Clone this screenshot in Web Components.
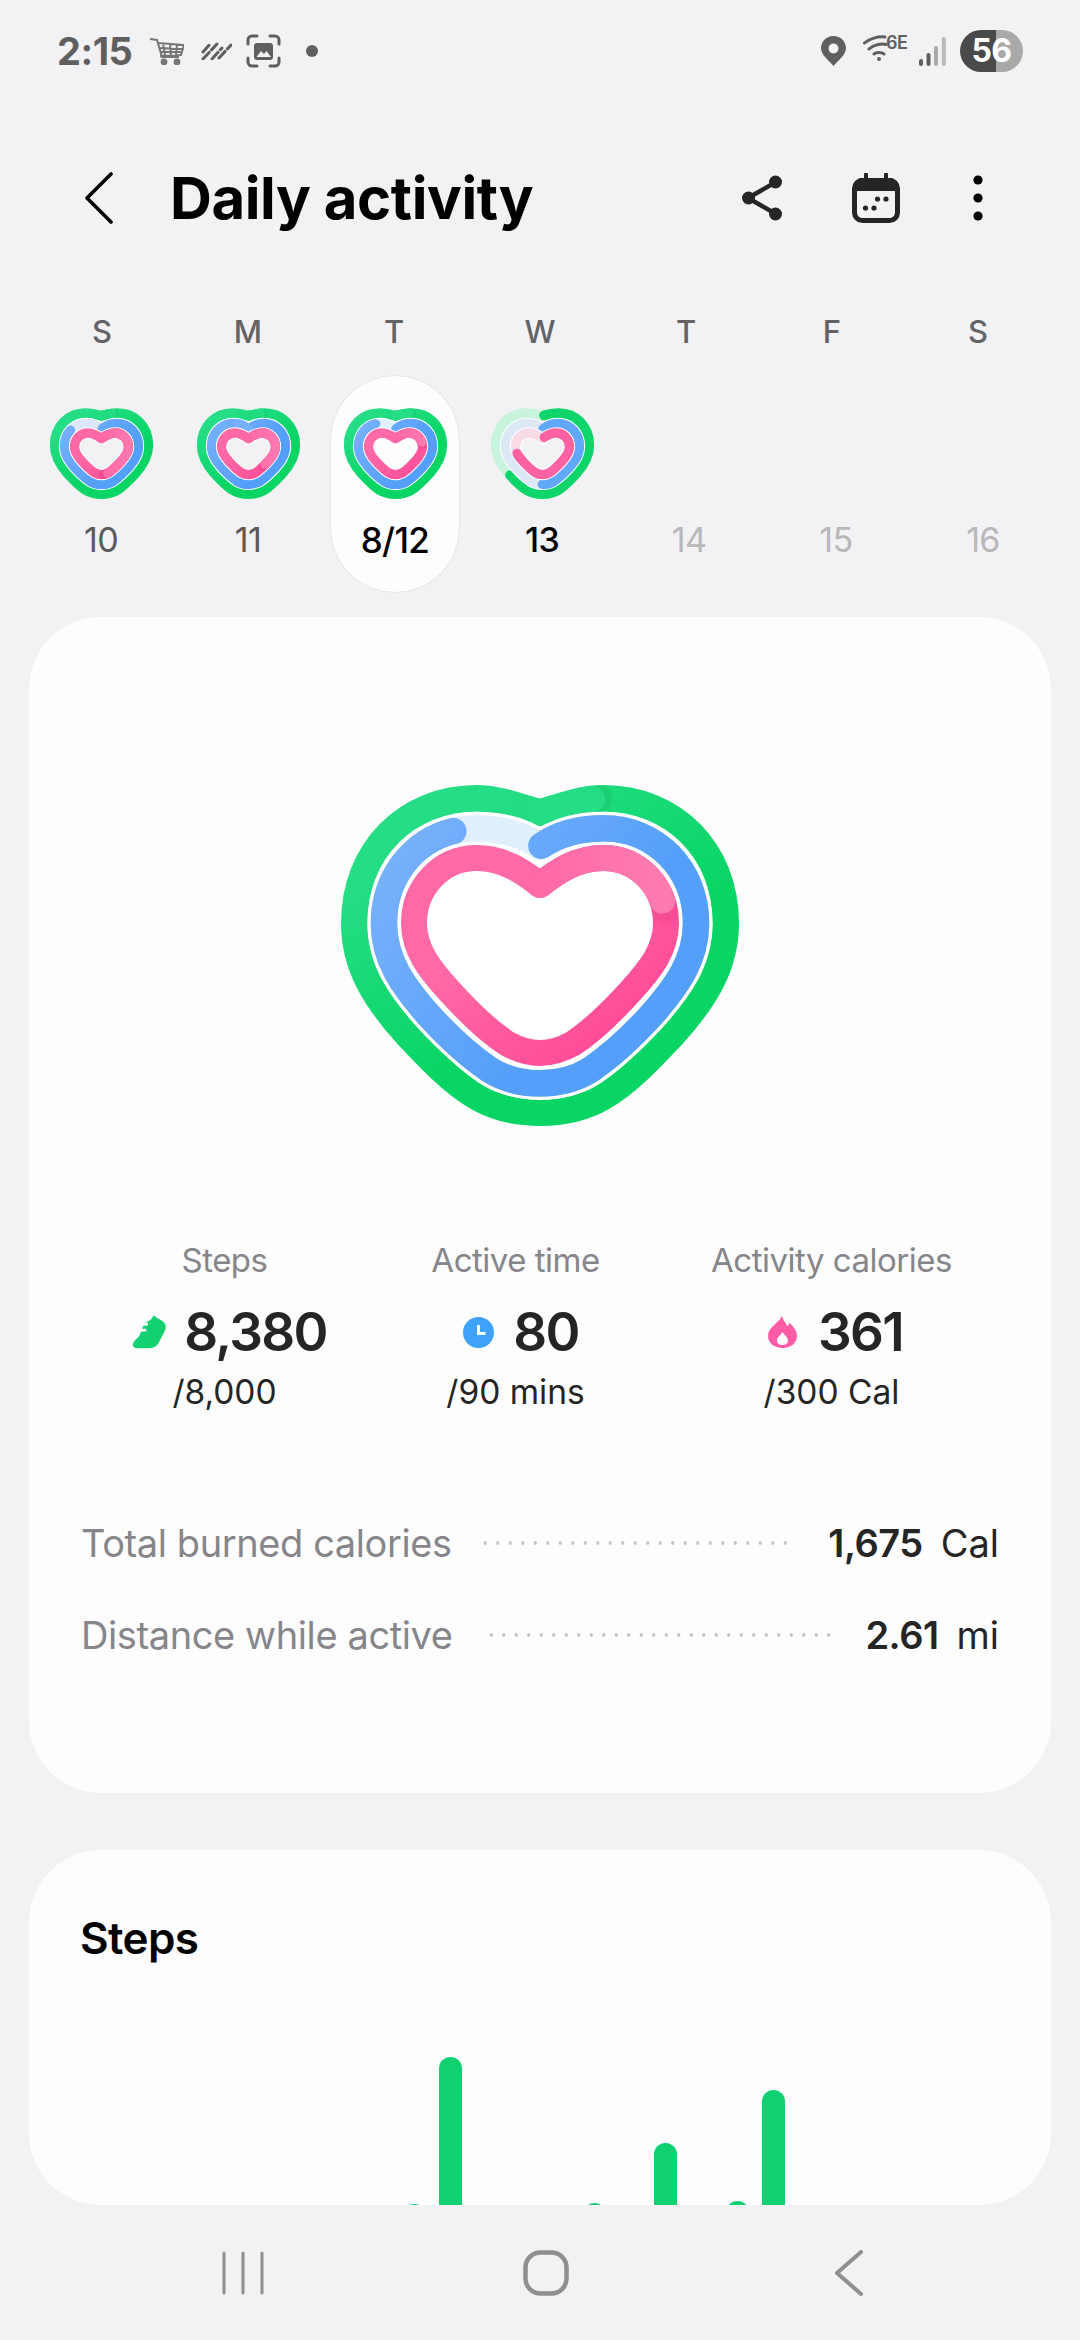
<!DOCTYPE html>
<html lang="en"><head><meta charset="utf-8"><title>Daily activity</title>
<style>
html,body{margin:0;padding:0}
body{width:1080px;height:2340px;overflow:hidden;background:#f2f2f4;font-family:Inter,"Noto Sans",sans-serif;color:#252525;display:flex;flex-direction:column}
</style></head><body>
<status-bar></status-bar>
<app-header title="Daily activity"></app-header>
<week-strip></week-strip>
<summary-card></summary-card>
<steps-card></steps-card>
<nav-bar></nav-bar>
<script>
function define(name, html, init){
  customElements.define(name, class extends HTMLElement{
    constructor(){super();const r=this.attachShadow({mode:'open'});r.innerHTML=typeof html==='function'?html(this):html;}
    connectedCallback(){ if(init) init(this); }
  });
}
/* normalised half-heart outlines: c1=[u, fraction of notch rise], then [u,v] control triples */
const SHAPES={
  g:{c1:[.13,.5],pts:[[.23,0],[.341,0],[.718,0],[1,.164],[1,.398],[1,.536],[.883,.642],[.722,.748],[.578,.838],[.467,.907],[.341,.95],[.233,.987],[.108,1],[0,1]]},
  b:{c1:[.107,.66],pts:[[.256,0],[.406,0],[.748,0],[1,.163],[1,.373],[1,.516],[.876,.621],[.705,.739],[.577,.824],[.449,.895],[.32,.948],[.224,.984],[.107,1],[0,1]]},
  p:{c1:[.132,.49],pts:[[.29,0],[.503,0],[.78,0],[1,.147],[1,.335],[1,.472],[.873,.574],[.714,.686],[.582,.78],[.423,.882],[.265,.95],[.172,.984],[.079,1],[0,1]]}
};
function heartPath(cx,hw,top,n,bot,key){
  const S=SHAPES[key],H=bot-top,f=x=>+x.toFixed(1);
  const pt=(u,v,s)=>`${f(cx+s*u*hw)} ${f(top+v*H)}`;
  const c1y=f(n-(n-top)*S.c1[1]);
  let d=`M${cx} ${n}C${f(cx+S.c1[0]*hw)} ${c1y} `;
  S.pts.forEach((p,i)=>{d+=pt(p[0],p[1],1)+(i%3===1&&i<S.pts.length-1?'C':' ');});
  const rev=S.pts.slice(1,-1).reverse();
  rev.forEach((p,i)=>{d+=(i%3===0?'C':' ')+pt(p[0],p[1],-1);});
  d+=`C${f(cx-S.pts[0][0]*hw)} ${f(top)} ${f(cx-S.c1[0]*hw)} ${c1y} ${cx} ${n}`;
  return d;
}
const GEOM={
  large:{vb:'0 0 1320 1140',w:440,h:380,gap:20,
    g:[660,557,115,158,1058,80],b:[660,468,205,260,970,80],p:[660,378,294,375,879,78]},
  small:{vb:'0 0 375 324',w:125,h:108,gap:6,
    g:[187.5,140,40,47,282,30],b:[187.5,111,70,88,253,28],p:[187.5,81,99,116,224,28]}
};
const shade=(to,o)=>[[0,to+1.4,`rgba(190,0,90,${o||.05})`],[0,to+.7,`rgba(190,0,90,${o||.06})`]];
const VARIANTS={
  d10:{g:{t:'url(#gg)',s:[[0,4.4,'rgba(0,0,0,.05)'],[0,3.6,'#22dc82']]},
       b:{t:'#dbe7f7',s:[[.3,84,'url(#bg)']]},
       p:{t:'url(#pg)',s:[...shade(47,.09),[0,46,'url(#po)']]}},
  d11:{g:{t:'url(#gg)',s:[[0,5,'rgba(0,0,0,.05)'],[0,4.2,'#22dc82']]},
       b:{t:'url(#bg)',s:[[94,100,'#78b0fb']]},
       p:{t:'url(#pg)',s:[...shade(38,.09),[0,37,'url(#po)']]}},
  d12:{g:{t:'url(#gg)',s:[[0,5.6,'rgba(0,0,0,.05)'],[0,4.9,'#24dd84']]},
       b:{t:'#e1f0fe',s:[[.2,90,'url(#bg)']]},
       p:{t:'url(#pg)',s:[...shade(21),[0,20.4,'url(#po)']]}},
  d13:{g:{t:'#c8f3dc',s:[[0.6,64,'#0dd56a']]},
       b:{t:'#dde8f7',s:[[.4,50,'#62a8fa']]},
       p:{t:'#f7dbe6',s:[[1.5,72,'#ff62a3']]}}
};
function ringMarkup(size,variant,bg){
  const G=GEOM[size],V=VARIANTS[variant];
  const ring=(k)=>{
    const [cx,hw,top,n,bot,w]=G[k], d=heartPath(cx,hw,top,n,bot,k), c=V[k];
    let o='';
    if(k!=='g') o+=`<path d="${d}" stroke="#fff" stroke-width="${w+G.gap}" stroke-linecap="round" fill="${bg}"/>`;
    o+=`<path d="${d}" stroke="${c.t}" stroke-width="${w}" stroke-linecap="round"/>`;
    c.s.forEach(([a,b,col])=>{o+=`<path d="${d}" pathLength="100" stroke="${col}" stroke-width="${w}" stroke-linecap="round" stroke-dasharray="${(b-a).toFixed(2)} 1000" stroke-dashoffset="${(-a).toFixed(2)}"/>`;});
    return o;
  };
  const W=+G.vb.split(' ')[2],Hh=+G.vb.split(' ')[3];
  return `<svg width="${G.w}" height="${G.h}" viewBox="${G.vb}" fill="none" aria-hidden="true"><defs>
  <linearGradient id="gg" gradientUnits="userSpaceOnUse" x1="${W*.4}" y1="${Hh*.1}" x2="${W*.65}" y2="${Hh*.55}"><stop offset="0" stop-color="#24dd84"/><stop offset="1" stop-color="#08d564"/></linearGradient>
  <linearGradient id="bg" gradientUnits="userSpaceOnUse" x1="${W*.15}" y1="${Hh*.2}" x2="${W*.6}" y2="${Hh*.6}"><stop offset="0" stop-color="#7ab2fb"/><stop offset="1" stop-color="#549ffa"/></linearGradient>
  <linearGradient id="pg" gradientUnits="userSpaceOnUse" x1="${W*.5}" y1="${Hh*.35}" x2="${W*.75}" y2="${Hh*.7}"><stop offset="0" stop-color="#ff69a6"/><stop offset="1" stop-color="#ff4896"/></linearGradient>
  <linearGradient id="po" gradientUnits="userSpaceOnUse" x1="${W*.5}" y1="0" x2="${W*.75}" y2="0"><stop offset="0" stop-color="#ff69a6"/><stop offset="1" stop-color="#ff7aaf"/></linearGradient>
  </defs>${ring('g')}${ring('b')}${ring('p')}</svg>`;
}
define('ring-heart',el=>`<style>:host{display:block;line-height:0}</style>`+ringMarkup(el.getAttribute('size')||'small',el.getAttribute('variant')||'d12',el.getAttribute('bg')||'#f2f2f4'));

define('status-bar',`<style>
:host{display:flex;align-items:center;height:102px;padding:0 57px;box-sizing:border-box;color:#5f5f60;flex:none}
.t{font:700 38px/1 Inter,sans-serif;letter-spacing:-.5px;width:93px}
svg{display:block;flex:none}
.sp{flex:1}
.six{font:600 18px/1 Inter,sans-serif;letter-spacing:-.6px;margin:-17px 13px 0 -7px;width:20px;color:#5f5f60}
.bat{width:63px;height:42px;border-radius:21px;background:linear-gradient(90deg,#4a4a4b 57%,#a9a9aa 57%);color:#fff;font:700 32px/42px Inter,sans-serif;text-align:center;letter-spacing:-.5px;margin-left:14px}
</style>
<span class="t">2:15</span>
<svg width="34" height="28" viewBox="0 0 34 28" fill="none" stroke="#767677" stroke-width="2"><path d="M0 2l7 1 5 17h17"/><path d="M8 6l26 2-3 10-21 1M13 6l2 13M20 7l1 12M27 7l-1 11M9 11l23 1M11 15l20 0"/><circle cx="14" cy="25" r="2.4" fill="#767677"/><circle cx="27" cy="25" r="2.4" fill="#767677"/></svg>
<svg width="31" height="18" viewBox="0 0 31 18" style="margin-left:17px" fill="none" stroke="#5f5f60" stroke-width="3" stroke-linecap="round" stroke-dasharray="9 3.5"><path d="M2 10L10 1M2 17L16 2M11 17L21 6M18 16L30 3"/></svg>
<svg width="35" height="34" viewBox="0 0 35 34" style="margin-left:14px" fill="none"><path d="M2 10V6a4 4 0 0 1 4-4h5M24 2h5a4 4 0 0 1 4 4v4M33 24v4a4 4 0 0 1-4 4h-5M11 32H6a4 4 0 0 1-4-4v-4" stroke="#5f5f60" stroke-width="3" stroke-linecap="round"/><rect x="8" y="9" width="19" height="17" rx="3" fill="#5f5f60"/><path d="M10.5 23l4.5-6 3 3 2.5-3 4.500 6z" fill="#f2f2f4"/></svg>
<svg width="12" height="12" viewBox="0 0 12 12" style="margin-left:25px"><circle cx="6" cy="6" r="6" fill="#5f5f60"/></svg>
<span class="sp"></span>
<svg width="25" height="30" viewBox="0 0 25 30"><path fill-rule="evenodd" d="M12.500 30C9 25.500 0 19 0 12.200 0 5.400 5.600 0 12.500 0S25 5.400 25 12.200C25 19 16 25.500 12.500 30zM12.500 7.500a5 5 0 1 0 0 10 5 5 0 0 0 0-10z" fill="#5f5f60"/></svg>
<svg width="30" height="27" viewBox="0 0 30 27" style="margin:-7px 0 0 17px" fill="none" stroke="#5f5f60" stroke-width="3" stroke-linecap="round"><path d="M1.500 9C6 5 15 2 22 3M6 15C10 11 18 9 23 10.500M11 20c2-2 8-2 10 0"/><circle cx="16" cy="25" r="1" fill="#5f5f60" stroke-width="2"/></svg>
<span class="six">6E</span>
<svg width="27" height="29" viewBox="0 0 27 29"><rect x="0" y="22" width="4" height="7" rx="2" fill="#5f5f60"/><rect x="7.500" y="16" width="4" height="13" rx="2" fill="#5f5f60"/><rect x="15" y="9" width="4" height="20" rx="2" fill="#a9a9aa"/><rect x="22.800" y="0" width="4" height="29" rx="2" fill="#b9b9ba"/></svg>
<span class="bat">56</span>`);

define('app-header',el=>`<style>
:host{display:flex;align-items:center;height:92px;margin-top:50px;padding:0 97px 0 85px;flex:none;color:#000}
svg{display:block;flex:none}
h1{margin:0 0 0 57px;font:700 58px/1 Inter,sans-serif;letter-spacing:-.4px;flex:1;white-space:nowrap}
</style>
<svg width="28" height="52" viewBox="0 0 28 52" fill="none" stroke="#000" stroke-width="3.600" stroke-linecap="round" stroke-linejoin="round"><path d="M26 2L2 26l24 24"/></svg>
<h1>${el.getAttribute('title')}</h1>
<svg width="40" height="46" viewBox="0 0 40 46" fill="#252525" stroke="#252525"><path d="M34 7L6 23l28 16" fill="none" stroke-width="4.500"/><circle cx="33.500" cy="7" r="6.500" stroke="none"/><circle cx="6.500" cy="23" r="6.500" stroke="none"/><circle cx="33.500" cy="39" r="6.500" stroke="none"/></svg>
<svg width="48" height="50" viewBox="0 0 48 50" style="margin-left:70px" fill="none"><rect x="2.500" y="7.500" width="43" height="40" rx="8" stroke="#252525" stroke-width="5"/><path d="M4 10a6 6 0 0 1 6-5h28a6 6 0 0 1 6 5v8H4z" fill="#252525"/><path d="M14 7V1.500M34 7V1.500" stroke="#252525" stroke-width="4" stroke-linecap="round"/><g fill="#252525"><circle cx="13.500" cy="35" r="2.600"/><circle cx="22" cy="35" r="2.600"/><circle cx="25.500" cy="26" r="2.600"/><circle cx="34" cy="26" r="2.600"/></g></svg>
<svg width="10" height="46" viewBox="0 0 10 46" style="margin-left:73px" fill="#000"><circle cx="5" cy="5" r="4.600"/><circle cx="5" cy="23" r="4.600"/><circle cx="5" cy="41" r="4.600"/></svg>`);

define('day-cell',el=>{
  const v=el.getAttribute('variant');
  const sel=el.hasAttribute('selected');
  return `<style>
  :host{display:flex;flex-direction:column;align-items:center;box-sizing:border-box;height:218px;padding-top:24px;border-radius:65px;border:1.500px solid transparent;font:400 34px/44px Inter,sans-serif;color:#5a5a5c}
  :host([selected]){background:#fdfdfe;border-color:#e6e6e8;color:#000;font-weight:500;font-size:35px}
  :host([today]){color:#000;font-weight:500}
  :host([future]){color:#b8b8ba}
  .h{height:108px}
  .n{margin-top:10px;letter-spacing:-.6px}
  </style><div class="h">${v?`<ring-heart variant="${v}" size="small" bg="${sel?'#fdfdfe':'#f2f2f4'}"></ring-heart>`:''}</div><div class="n"><slot></slot></div>`;
});

define('week-strip',`<style>
:host{display:block;flex:none}
.l{display:grid;grid-template-columns:repeat(7,146px);padding:0 0 0 29px;margin-top:66px;font:500 31px/44px Inter,sans-serif;color:#636366;text-align:center}
.d{display:grid;grid-template-columns:repeat(7,130px);column-gap:17px;padding-left:36px;margin-top:21px}
</style>
<div class="l"><span>S</span><span>M</span><span>T</span><span>W</span><span>T</span><span>F</span><span>S</span></div>
<div class="d">
<day-cell variant="d10">10</day-cell><day-cell variant="d11">11</day-cell><day-cell variant="d12" selected>8/12</day-cell><day-cell variant="d13" today>13</day-cell><day-cell future>14</day-cell><day-cell future>15</day-cell><day-cell future>16</day-cell>
</div>`);

define('stat-col',el=>`<style>
:host{display:flex;flex-direction:column;align-items:center;text-align:center;white-space:nowrap}
.l{font:400 33px/44px Inter,sans-serif;color:#86868a;letter-spacing:-.5px}
.v{display:flex;align-items:center;height:60px;margin-top:20px;margin-left:${el.getAttribute('shift')||0}px;font:600 53px/60px Inter,sans-serif;color:#252525;letter-spacing:-1.7px}
.s{font:400 33.500px/44px Inter,sans-serif;color:#252525;margin-top:8px}
::slotted(svg){display:block;flex:none}
</style>
<div class="l">${el.getAttribute('label')}</div>
<div class="v"><slot></slot><span style="margin-left:${el.getAttribute('gap')||18}px">${el.getAttribute('value')}</span></div>
<div class="s">${el.getAttribute('sub')}</div>`);

define('kv-row',el=>`<style>
:host{display:flex;align-items:center;height:50px;font:400 38px/50px Inter,sans-serif;white-space:nowrap}
.k{color:#86868a;letter-spacing:-.4px}
.d{flex:1;height:4px;margin:0 ${el.getAttribute('dr')||33}px 0 ${el.getAttribute('dl')||27}px;background:radial-gradient(circle,#c2c2c4 1.500px,transparent 2px) 0 0/12.500px 4px repeat-x}
.v{font-weight:600;color:#252525;letter-spacing:-.5px}
.u{margin-left:18px;color:#252525}
</style><span class="k">${el.getAttribute('key')}</span><span class="d"></span><span class="v">${el.getAttribute('value')}</span><span class="u">${el.getAttribute('unit')}</span>`);

define('summary-card',`<style>
:host{display:block;box-sizing:border-box;flex:none;width:1022px;height:1176px;margin:24px 0 0 29px;background:#fdfdfe;border-radius:72px;padding-top:143px}
ring-heart{width:440px;margin:0 auto}
.stats{display:grid;grid-template-columns:289px 293px 339px;padding-left:51px;margin-top:98px}
.rows{display:flex;flex-direction:column;gap:42px;padding:0 52px;margin-top:104px}
</style>
<ring-heart size="large" variant="d12" bg="#fff"></ring-heart>
<div class="stats">
<stat-col label="Steps" value="8,380" sub="/8,000" shift="10"><svg width="34" height="34" viewBox="20 28 102 100"><path d="M85 28C92 36 104 40 112 46C122 54 124 64 118 76L100 110C94 122 82 127 68 127L36 127C22 127 18 114 28 104L42 90 46 78 64 76 62 68 50 68 54 60 68 58 68 50 60 50C72 46 82 38 85 28Z" fill="#13d070"/></svg></stat-col>
<stat-col label="Active time" value="80" sub="/90 mins" shift="11" gap="19"><svg width="31" height="31" viewBox="0 0 31 31" fill="none"><circle cx="15.500" cy="15.500" r="15.500" fill="#3ea2f8"/><path d="M15.500 8v8.500h7" stroke="#fff" stroke-width="3"/></svg></stat-col>
<stat-col label="Activity calories" value="361" sub="/300 Cal" gap="21" shift="8"><svg width="29" height="32" viewBox="0 0 29 32"><path fill-rule="evenodd" d="M14 0c1.500 5 4 7 5 10 1-.500 2-1.500 2.500-3 4 3.500 7.500 8 7.500 13 0 7-6.200 12-14.500 12S0 27 0 20C0 11 11 7 14 0zM14.500 16c-2 3-5.500 5.500-5.500 8.500 0 2.800 2.300 4.500 5.500 4.500s5.500-1.700 5.500-4.500c0-3-3.500-5.500-5.500-8.500z" fill="#ff5ca8"/></svg></stat-col>
</div>
<div class="rows">
<kv-row key="Total burned calories" value="1,675" unit="Cal"></kv-row>
<kv-row key="Distance while active" value="2.61" unit="mi" dl="32" dr="26"></kv-row>
</div>`);

define('steps-card',`<style>
:host{display:block;box-sizing:border-box;flex:none;width:1022px;height:355px;margin:57px 0 0 29px;background:#fdfdfe;border-radius:72px;overflow:hidden;padding-top:60px}
h2{margin:0 0 0 51px;font:600 44px/56px Inter,sans-serif;color:#000;letter-spacing:-.6px}
.chart{display:grid;grid-template-columns:repeat(24,35.830px);justify-items:center;align-items:start;padding-left:45.500px;height:300px;margin-top:0;box-sizing:border-box}
.chart i{display:block;width:23px;height:260px;border-radius:11.500px;background:#10d070}
</style>
<h2>Steps</h2>
<div class="chart" id="c"></div>`,el=>{
  const c=el.shadowRoot.getElementById('c');
  const tops={9:2204,10:2057,14:2203,16:2143,18:2201,19:2090};
  for(let i=0;i<24;i++){const s=document.createElement('span');if(tops[i]){const b=document.createElement('i');b.style.marginTop=(tops[i]-1966)+'px';s.append(b);}c.append(s);}
});

define('nav-bar',`<style>
:host{display:grid;grid-template-columns:repeat(3,303px);padding-left:91px;align-items:center;justify-items:center;height:135px;flex:none}
svg{display:block}
</style>
<svg width="44" height="44" viewBox="0 0 44 44" fill="none" stroke="#8f8f91" stroke-width="3" stroke-linecap="round"><path d="M3 2v40M22 2v40M41 2v40"/></svg>
<svg width="46" height="46" viewBox="0 0 46 46" fill="none"><rect x="2.500" y="2.500" width="41" height="41" rx="15" stroke="#8f8f91" stroke-width="4.500"/></svg>
<svg width="28" height="46" viewBox="0 0 28 46" fill="none" stroke="#8f8f91" stroke-width="4" stroke-linecap="round" stroke-linejoin="round"><path d="M26 2L2 23l24 21"/></svg>`);
</script>
</body></html>
